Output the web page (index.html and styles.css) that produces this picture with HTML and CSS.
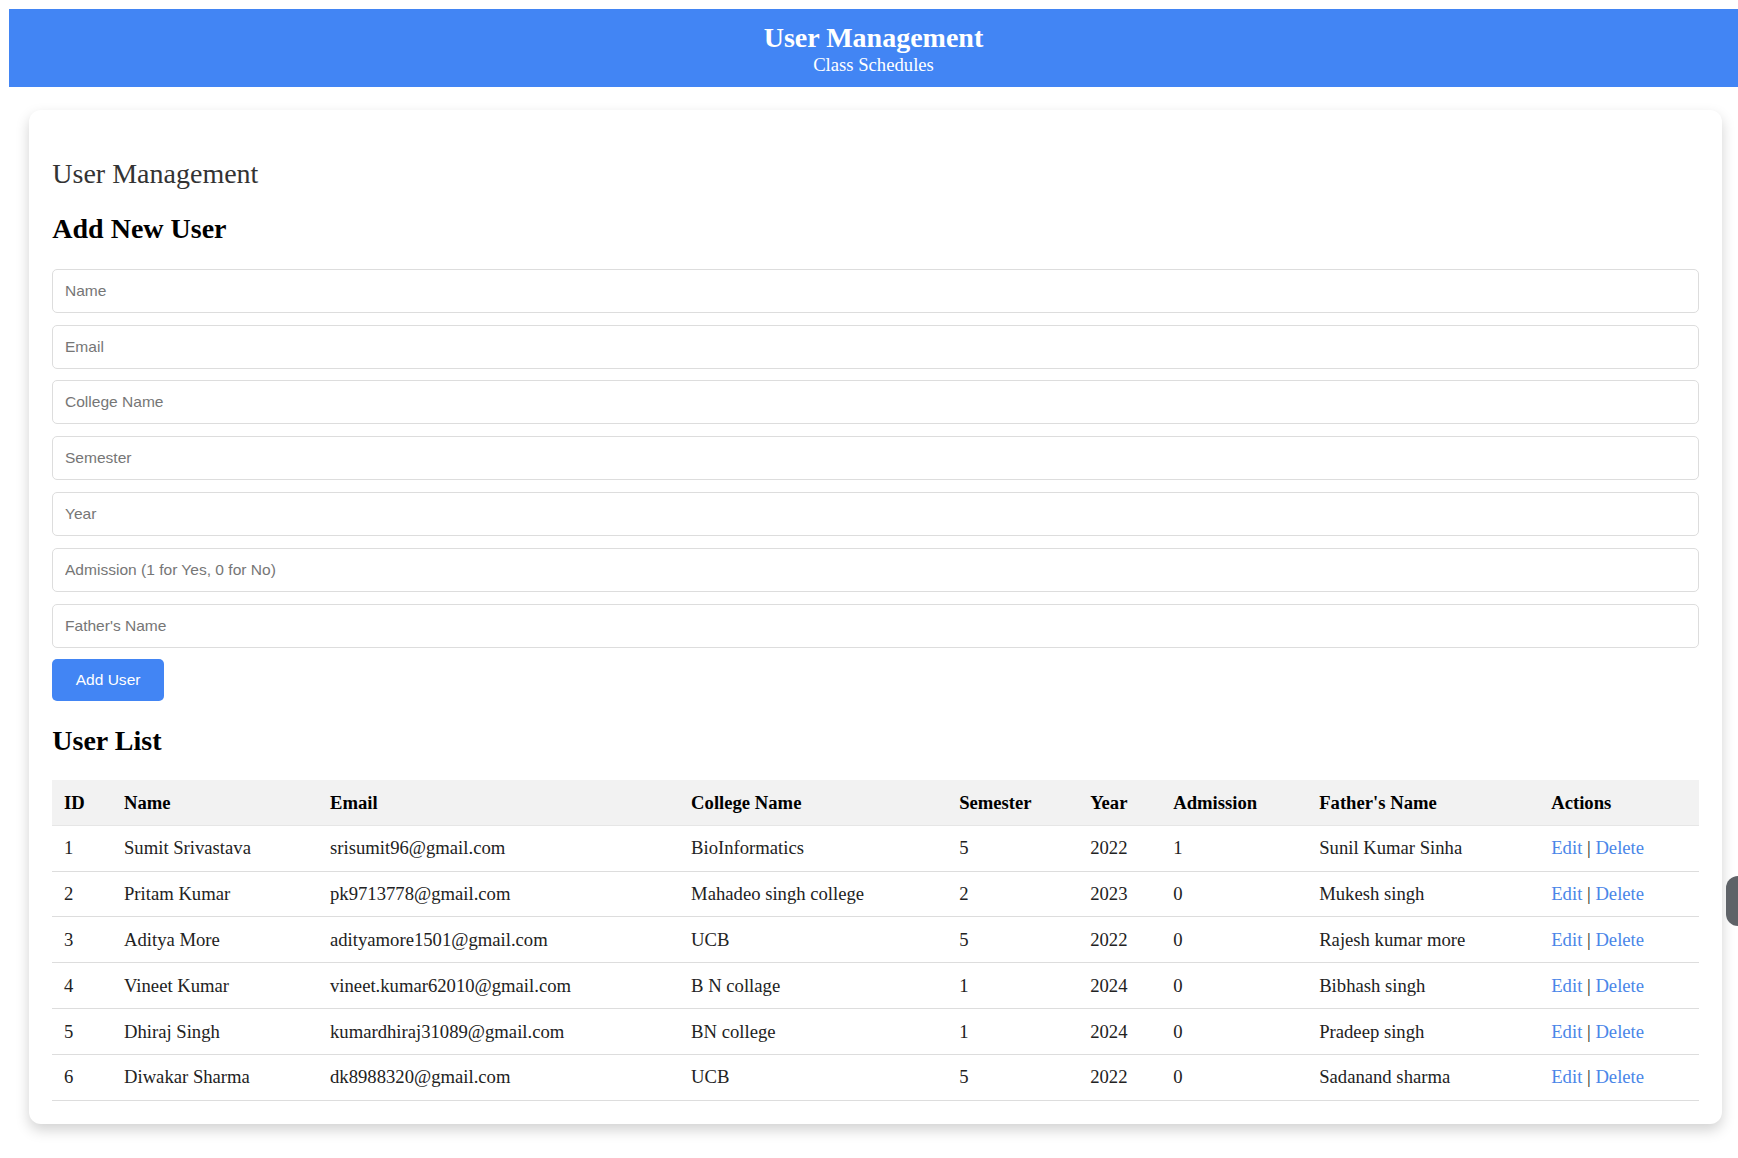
FILE: index.html
```html
<!DOCTYPE html>
<html lang="en">
<head>
<meta charset="utf-8">
<title>User Management</title>
<link rel="stylesheet" href="styles.css">
</head>
<body>
<header class="topbar">
  <h1 class="topbar-title">User Management</h1>
  <p class="topbar-sub">Class Schedules</p>
</header>
<main class="card">
  <h2 class="page-title">User Management</h2>
  <h2 class="section-title">Add New User</h2>
  <form class="user-form">
    <input class="field" type="text" placeholder="Name">
    <input class="field" type="text" placeholder="Email">
    <input class="field" type="text" placeholder="College Name">
    <input class="field" type="text" placeholder="Semester">
    <input class="field" type="text" placeholder="Year">
    <input class="field" type="text" placeholder="Admission (1 for Yes, 0 for No)">
    <input class="field" type="text" placeholder="Father's Name">
    <button class="btn" type="button">Add User</button>
  </form>
  <h2 class="section-title">User List</h2>
  <table class="users">
    <colgroup>
      <col class="c-id"><col class="c-name"><col class="c-email"><col class="c-college"><col class="c-sem"><col class="c-year"><col class="c-adm"><col class="c-father"><col class="c-act">
    </colgroup>
    <thead>
      <tr><th>ID</th><th>Name</th><th>Email</th><th>College Name</th><th>Semester</th><th>Year</th><th>Admission</th><th>Father's Name</th><th>Actions</th></tr>
    </thead>
    <tbody>
      <tr><td>1</td><td>Sumit Srivastava</td><td>srisumit96@gmail.com</td><td>BioInformatics</td><td>5</td><td>2022</td><td>1</td><td>Sunil Kumar Sinha</td><td><a href="#">Edit</a> | <a href="#">Delete</a></td></tr>
      <tr><td>2</td><td>Pritam Kumar</td><td>pk9713778@gmail.com</td><td>Mahadeo singh college</td><td>2</td><td>2023</td><td>0</td><td>Mukesh singh</td><td><a href="#">Edit</a> | <a href="#">Delete</a></td></tr>
      <tr><td>3</td><td>Aditya More</td><td>adityamore1501@gmail.com</td><td>UCB</td><td>5</td><td>2022</td><td>0</td><td>Rajesh kumar more</td><td><a href="#">Edit</a> | <a href="#">Delete</a></td></tr>
      <tr><td>4</td><td>Vineet Kumar</td><td>vineet.kumar62010@gmail.com</td><td>B N collage</td><td>1</td><td>2024</td><td>0</td><td>Bibhash singh</td><td><a href="#">Edit</a> | <a href="#">Delete</a></td></tr>
      <tr><td>5</td><td>Dhiraj Singh</td><td>kumardhiraj31089@gmail.com</td><td>BN college</td><td>1</td><td>2024</td><td>0</td><td>Pradeep singh</td><td><a href="#">Edit</a> | <a href="#">Delete</a></td></tr>
      <tr><td>6</td><td>Diwakar Sharma</td><td>dk8988320@gmail.com</td><td>UCB</td><td>5</td><td>2022</td><td>0</td><td>Sadanand sharma</td><td><a href="#">Edit</a> | <a href="#">Delete</a></td></tr>
    </tbody>
  </table>
</main>
<div class="side-tab"></div>
</body>
</html>
```

FILE: styles.css
```css
html, body {
  background: #ffffff;
}
body {
  margin: 9px 0 0 9px;
  padding-bottom: 20px;
  font-family: "Liberation Serif", "Times New Roman", serif;
  font-size: 18.67px;
  color: #333;
}
.topbar {
  background: #4285f4;
  color: #ffffff;
  text-align: center;
  padding: 12.5px 0 11.2px;
}
.topbar-title {
  margin: 0;
  font-size: 28px;
  font-weight: bold;
  line-height: 32.5px;
}
.topbar-sub {
  margin: 0;
  font-size: 18.67px;
  line-height: 21.5px;
}
.card {
  display: block;
  margin: 23px 16px 0 20px;
  padding: 23.33px;
  background: #fff;
  border-radius: 12px;
  box-shadow: 0 6px 14px rgba(0, 0, 0, 0.18);
}
.page-title {
  margin: 25px 0 23.2px;
  font-size: 28px;
  font-weight: normal;
  color: #333;
  line-height: 32.2px;
}
.section-title {
  margin: 23.2px 0;
  font-size: 28px;
  font-weight: bold;
  color: #000;
  line-height: 32.2px;
}
.user-form {
  display: flex;
  flex-direction: column;
  align-items: flex-start;
}
.field {
  box-sizing: border-box;
  width: 100%;
  height: 44px;
  margin: 0 0 11.8px;
  padding: 0 11.67px;
  border: 1.17px solid #dddddd;
  border-radius: 5px;
  font-family: "Liberation Sans", Arial, sans-serif;
  font-size: 15.55px;
  color: #333;
  background: #fff;
  outline: none;
}
.field::placeholder {
  color: #767676;
}
.btn {
  height: 42px;
  padding: 0 23.33px;
  border: none;
  border-radius: 5px;
  background: #4285f4;
  color: #fff;
  font-family: "Liberation Sans", Arial, sans-serif;
  font-size: 15.55px;
}
.users {
  width: 100%;
  table-layout: fixed;
  border-collapse: collapse;
  font-size: 18.67px;
}
.c-id { width: 60px; }
.c-name { width: 206px; }
.c-email { width: 361px; }
.c-college { width: 268px; }
.c-sem { width: 131px; }
.c-year { width: 83px; }
.c-adm { width: 146px; }
.c-father { width: 232px; }
.c-act { width: 159px; }
.users th,
.users td {
  text-align: left;
  padding: 11.67px;
  line-height: 21.5px;
  border-bottom: 1.17px solid #dddddd;
  white-space: nowrap;
  color: #222;
}
.users th {
  background: #f2f2f2;
  font-weight: bold;
  color: #000;
  border-bottom-color: #e6e6e6;
}
.users a {
  color: #4a86e8;
  text-decoration: none;
}
.side-tab {
  position: fixed;
  right: 0;
  top: 876px;
  width: 12px;
  height: 50px;
  background: #5f6368;
  border-radius: 12px 0 0 12px;
}
```
